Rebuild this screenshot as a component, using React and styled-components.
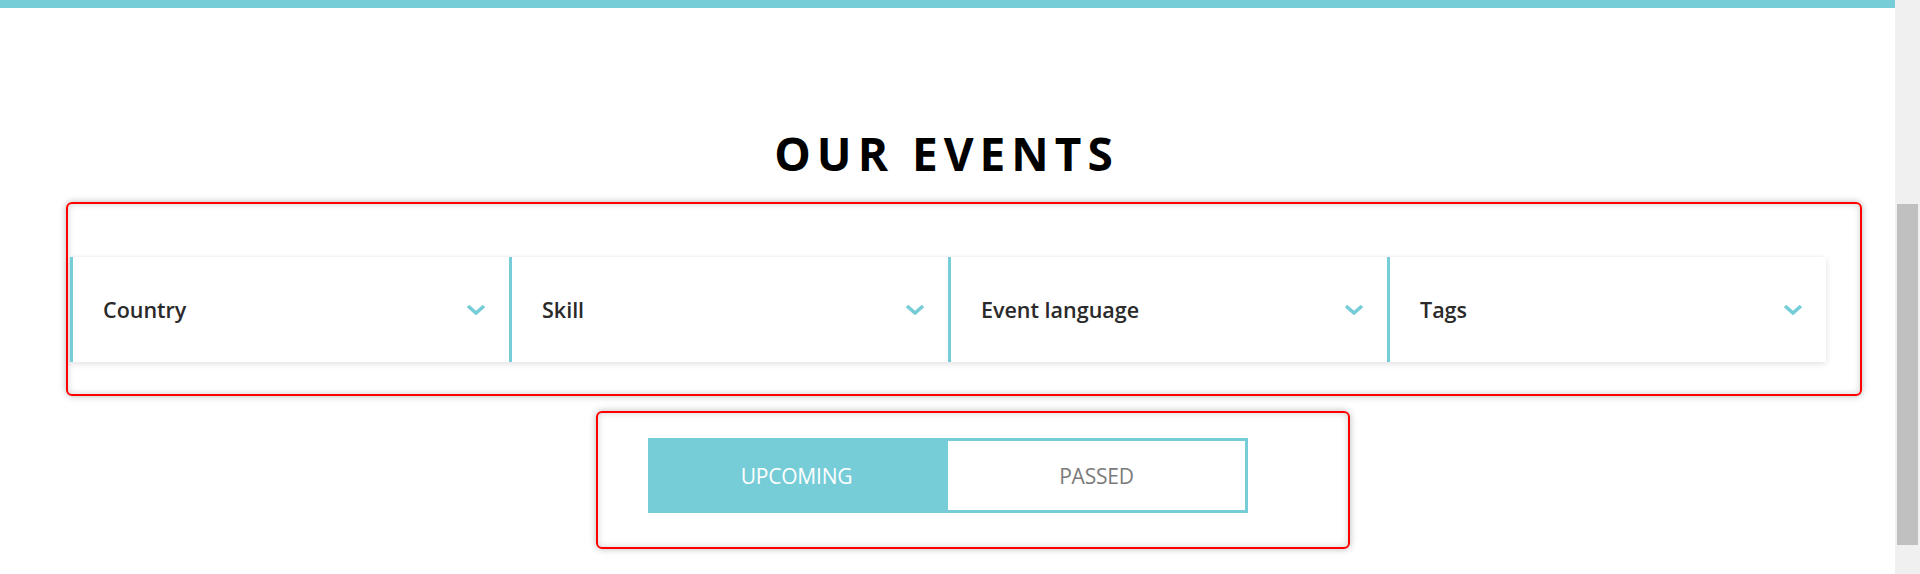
import React from "react";
import styled, { createGlobalStyle } from "styled-components";

const TEAL = "#76cdd7";

const Global = createGlobalStyle`
  html, body { margin: 0; padding: 0; background: #fff; overflow: hidden; }
  body { font-family: "Open Sans", "Liberation Sans", sans-serif; }
  * { box-sizing: border-box; }
`;

const Page = styled.div`
  display: flex;
  width: 100%;
  height: 100vh;
`;

const Main = styled.main`
  flex: 1;
  display: flex;
  flex-direction: column;
  min-width: 0;
`;

const TopBar = styled.div`
  height: 8px;
  background: ${TEAL};
`;

const Title = styled.h2`
  margin: 117px 0 21px;
  font-family: "Open Sans", "Liberation Sans", sans-serif;
  font-weight: 700;
  font-size: 46px;
  line-height: 56px;
  letter-spacing: 6px;
  text-align: center;
  color: #000;
  padding-right: 2px;
`;

const Annotation = styled.div`
  border: 2px solid #ff0000;
  border-radius: 6px;
  box-shadow: 0 0 7px rgba(0, 0, 0, 0.28), inset 0 0 7px rgba(0, 0, 0, 0.18);
  margin-left: ${(p) => p.$left}px;
  width: ${(p) => p.$width}px;
  height: ${(p) => p.$height}px;
  margin-top: ${(p) => p.$top || 0}px;
  padding: ${(p) => p.$pad};
`;

const FilterCard = styled.div`
  display: grid;
  grid-template-columns: repeat(4, 1fr);
  height: 105px;
  background: #fff;
  box-shadow: 0 2px 6px rgba(0, 0, 0, 0.12), 0 -1px 2px rgba(0, 0, 0, 0.03);
`;

const Select = styled.div`
  display: flex;
  align-items: center;
  justify-content: space-between;
  border-left: 3px solid ${TEAL};
  padding: 0 23px 0 30px;
  font-family: "Open Sans", "Liberation Sans", sans-serif;
  font-weight: 600;
  font-size: 21.5px;
  color: #2a2a2a;
`;

const Chevron = () => (
  <svg width="20" height="11" viewBox="0 0 20 11" fill="none">
    <polyline
      points="2,2 10,9 18,2"
      stroke={TEAL}
      strokeWidth="3.6"
      strokeLinecap="butt"
      strokeLinejoin="miter"
    />
  </svg>
);

const Toggle = styled.div`
  display: flex;
  width: 600px;
  height: 75px;
`;

const ToggleButton = styled.button`
  flex: 1;
  display: flex;
  align-items: center;
  justify-content: center;
  margin: 0;
  padding: 0;
  font-family: "Open Sans", "Liberation Sans", sans-serif;
  font-weight: 400;
  font-size: 21px;
  letter-spacing: -0.2px;
  cursor: pointer;
  background: ${(p) => (p.$active ? TEAL : "#fff")};
  color: ${(p) => (p.$active ? "#fff" : "#7b7b7b")};
  border: ${(p) => (p.$active ? "none" : `3px solid ${TEAL}`)};
`;

const Scrollbar = styled.div`
  width: 25px;
  background: #f0f0f0;
  padding: 204px 2px 0;
`;

const Thumb = styled.div`
  height: 341px;
  background: #c0c0c0;
`;

const filters = ["Country", "Skill", "Event language", "Tags"];

export default function App() {
  return (
    <>
      <Global />
      <Page>
        <Main>
          <TopBar />
          <Title>OUR EVENTS</Title>
          <Annotation $left={66} $width={1796} $height={194} $pad="53px 34px 30px 2px">
            <FilterCard>
              {filters.map((f) => (
                <Select key={f}>
                  <span>{f}</span>
                  <Chevron />
                </Select>
              ))}
            </FilterCard>
          </Annotation>
          <Annotation $left={596} $width={754} $height={138} $top={15} $pad="25px 0 0 50px">
            <Toggle>
              <ToggleButton $active>UPCOMING</ToggleButton>
              <ToggleButton>PASSED</ToggleButton>
            </Toggle>
          </Annotation>
        </Main>
        <Scrollbar>
          <Thumb />
        </Scrollbar>
      </Page>
    </>
  );
}
